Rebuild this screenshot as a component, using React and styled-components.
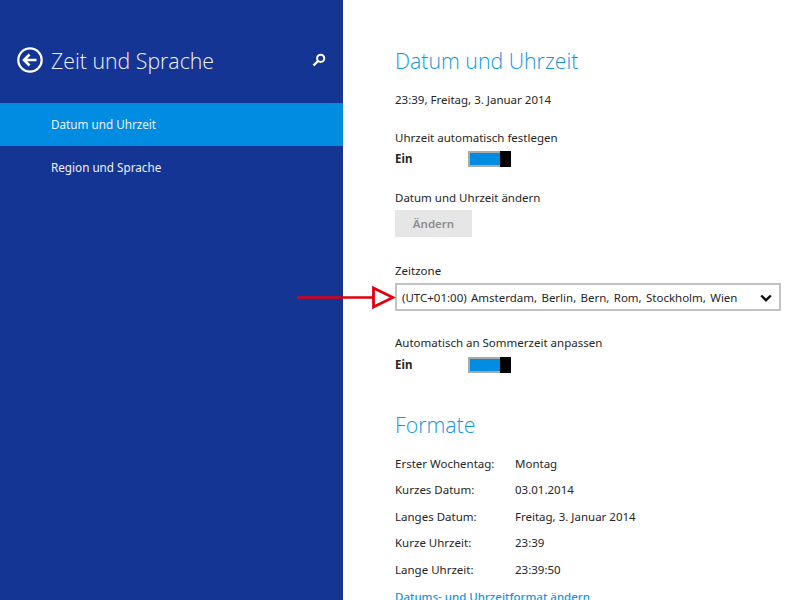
import React from 'react';
import styled, { createGlobalStyle } from 'styled-components';

const GlobalStyle = createGlobalStyle`
  html, body {
    margin: 0;
    padding: 0;
    background: #fff;
  }
`;

const FONT = `'Noto Sans', 'Open Sans', sans-serif`;
const LIGHT_FONT = `'Open Sans', 'Noto Sans', sans-serif`;

const Page = styled.div`
  position: relative;
  width: 800px;
  height: 600px;
  display: flex;
  overflow: hidden;
  font-family: ${FONT};
  font-size: 11.5px;
  color: #262626;
`;

const Sidebar = styled.aside`
  width: 343px;
  flex: none;
  background: #153595;
  color: #fff;
`;

const SideHeader = styled.div`
  height: 103px;
  box-sizing: border-box;
  padding: 45px 17px 0 17px;
  display: flex;
  align-items: flex-start;
`;

const BackIcon = styled.svg`
  width: 26px;
  height: 26px;
  flex: none;
  margin-top: 2px;
`;

const SideTitle = styled.h1`
  flex: 1;
  margin: 1px 0 0 8px;
  font-family: ${LIGHT_FONT};
  font-size: 21.3px;
  line-height: 30px;
  font-weight: 300;
  color: #eef2fb;
`;

const SearchIcon = styled.svg`
  width: 14px;
  height: 14px;
  margin-top: 8px;
`;

const NavItem = styled.div`
  height: 43px;
  box-sizing: border-box;
  padding: 0 0 2px 51px;
  display: flex;
  align-items: center;
  font-size: 11.7px;
  color: #eef2fb;
  background: ${p => (p.$active ? '#008ce1' : 'transparent')};
`;

const Main = styled.main`
  flex: 1;
  padding: 45px 19px 0 52px;
  min-width: 0;
`;

const Heading = styled.h2`
  margin: ${p => p.$top || 0}px 0 0;
  font-family: ${LIGHT_FONT};
  font-size: 21.3px;
  line-height: 32px;
  font-weight: 300;
  color: #1496df;
`;

const Text = styled.div`
  line-height: 16px;
  margin-top: ${p => p.$top || 0}px;
`;

const ToggleRow = styled.div`
  display: flex;
  align-items: center;
  margin-top: ${p => p.$top}px;
  height: 16px;
`;

const ToggleLabel = styled.span`
  width: 73px;
  font-weight: 700;
`;

const ToggleTrack = styled.div`
  width: 43px;
  height: 16px;
  margin-top: 1px;
  box-sizing: border-box;
  border: 2px solid #a9a9a9;
  border-right: none;
  display: flex;
  justify-content: flex-end;
  background: #008ce1;
`;

const ToggleThumb = styled.div`
  width: 11px;
  height: 16px;
  margin-top: -2px;
  flex: none;
  background: #000;
`;

const DisabledButton = styled.div`
  width: 77px;
  height: 27px;
  margin-top: 4px;
  display: flex;
  align-items: center;
  justify-content: center;
  background: #e6e6e6;
  color: #8e8e8e;
  font-weight: 600;
`;

const Select = styled.div`
  height: 28px;
  box-sizing: border-box;
  margin-top: 4px;
  padding: 0 7px 0 5px;
  border: 2px solid #c2c2c2;
  display: flex;
  align-items: center;
  justify-content: space-between;
  word-spacing: 1.3px;
`;

const Chevron = styled.svg`
  width: 12px;
  height: 8px;
  margin-top: 1px;
`;

const FormatList = styled.div`
  display: grid;
  grid-template-columns: 120px 1fr;
  grid-auto-rows: 26.5px;
  align-items: center;
  margin-top: 9px;
`;

const FormatLink = styled.div`
  margin-top: 6px;
  line-height: 16px;
  color: #1496df;
  font-weight: 500;
`;

const Callout = styled.svg`
  position: absolute;
  left: 296px;
  top: 284px;
  width: 100px;
  height: 27px;
`;

const FORMATS = [
  ['Erster Wochentag:', 'Montag'],
  ['Kurzes Datum:', '03.01.2014'],
  ['Langes Datum:', 'Freitag, 3. Januar 2014'],
  ['Kurze Uhrzeit:', '23:39'],
  ['Lange Uhrzeit:', '23:39:50'],
];

const Toggle = ({ top }) => (
  <ToggleRow $top={top}>
    <ToggleLabel>Ein</ToggleLabel>
    <ToggleTrack>
      <ToggleThumb />
    </ToggleTrack>
  </ToggleRow>
);

export default function App() {
  return (
    <Page>
      <GlobalStyle />
      <Sidebar>
        <SideHeader>
          <BackIcon viewBox="0 0 26 26" fill="none" stroke="#fff">
            <circle cx="13" cy="13" r="11.7" strokeWidth="2.2" />
            <path d="M19.5 13H7.5M12.5 7.5 7 13l5.5 5.5" strokeWidth="2.6" />
          </BackIcon>
          <SideTitle>Zeit und Sprache</SideTitle>
          <SearchIcon viewBox="0 0 14 14" fill="none" stroke="#fff">
            <circle cx="8.7" cy="5.3" r="3.6" strokeWidth="2" />
            <path d="M6 8 1.5 12.5" strokeWidth="2.4" />
          </SearchIcon>
        </SideHeader>
        <NavItem $active>Datum und Uhrzeit</NavItem>
        <NavItem>Region und Sprache</NavItem>
      </Sidebar>
      <Main>
        <Heading>Datum und Uhrzeit</Heading>
        <Text $top={15}>23:39, Freitag, 3. Januar 2014</Text>
        <Text $top={22}>Uhrzeit automatisch festlegen</Text>
        <Toggle top={4} />
        <Text $top={24}>Datum und Uhrzeit ändern</Text>
        <DisabledButton>Ändern</DisabledButton>
        <Text $top={26}>Zeitzone</Text>
        <Select>
          <span>(UTC+01:00) Amsterdam, Berlin, Bern, Rom, Stockholm, Wien</span>
          <Chevron viewBox="0 0 12 8" fill="none" stroke="#111">
            <path d="M1.2 1.5 6 6.2l4.8-4.7" strokeWidth="2.4" />
          </Chevron>
        </Select>
        <Text $top={24}>Automatisch an Sommerzeit anpassen</Text>
        <Toggle top={5} />
        <Heading $top={37}>Formate</Heading>
        <FormatList>
          {FORMATS.map(([label, value]) => (
            <React.Fragment key={label}>
              <span>{label}</span>
              <span>{value}</span>
            </React.Fragment>
          ))}
        </FormatList>
        <FormatLink>Datums- und Uhrzeitformat ändern</FormatLink>
      </Main>
      <Callout viewBox="0 0 100 27" fill="none" stroke="#e0000f">
        <path d="M1 13.5H77" strokeWidth="2.6" />
        <path d="M77.5 4 97 13.5 77.5 23Z" strokeWidth="2.8" fill="#fff" />
      </Callout>
    </Page>
  );
}
